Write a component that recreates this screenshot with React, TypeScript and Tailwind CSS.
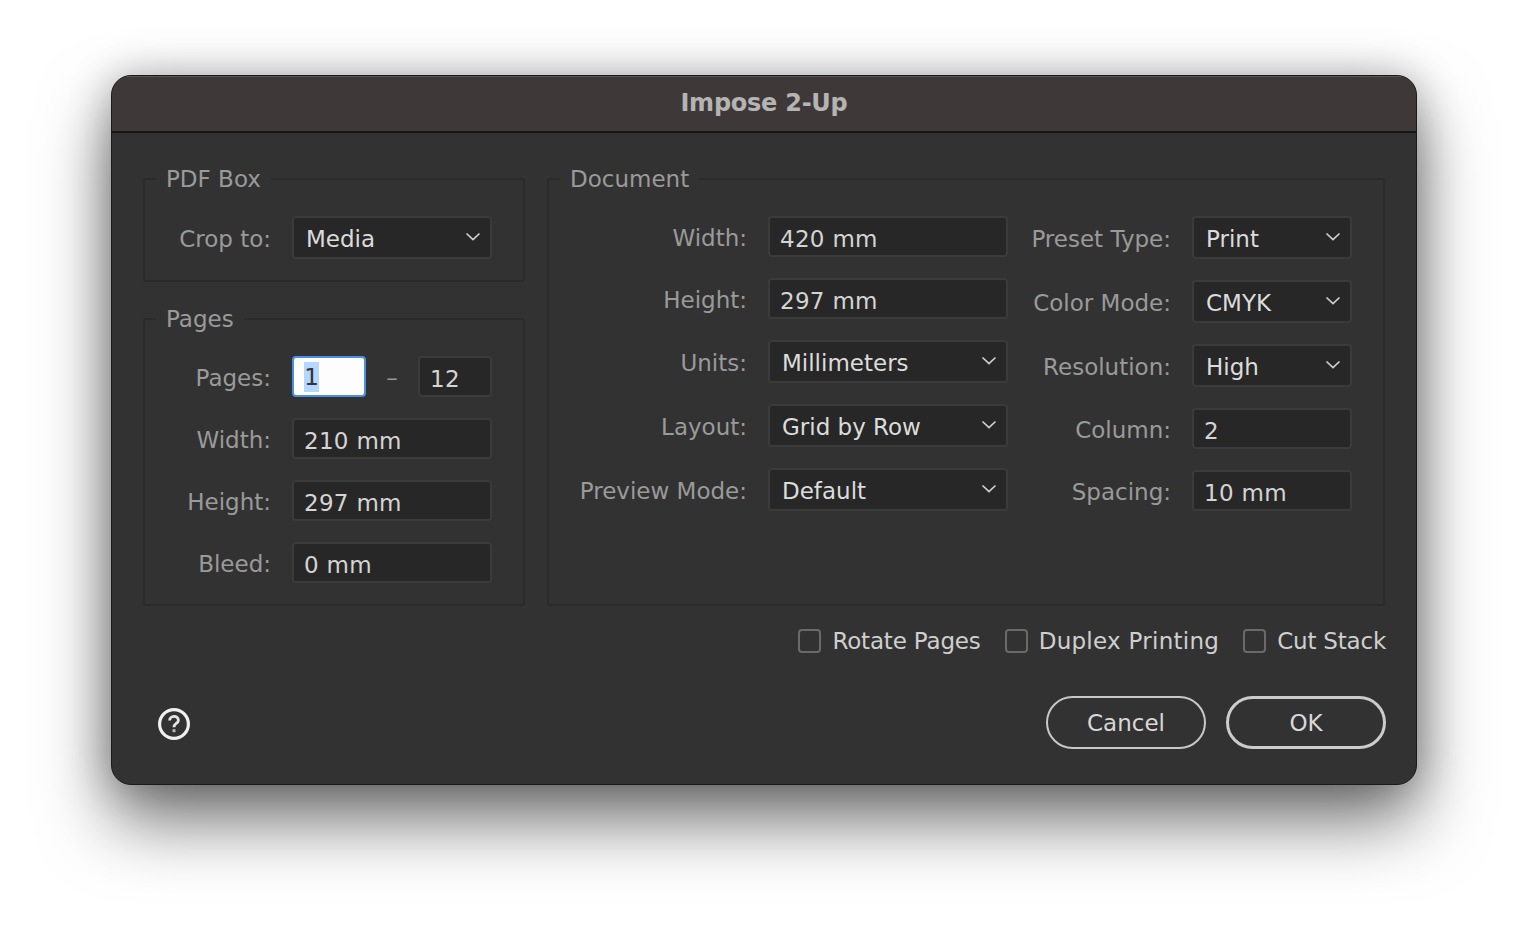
const labelClass = 'text-right text-[#9a9a9a] whitespace-nowrap pt-[4px]';

function Chevron() {
  return (
    <svg width="16" height="10" viewBox="0 0 16 10" fill="none" className="shrink-0">
      <path d="M1.5 1.5 L8 7.5 L14.5 1.5" stroke="#d0d0d0" strokeWidth="1.7" />
    </svg>
  );
}

function Select({ value, width }: { value: string; width: string }) {
  return (
    <div className={`${width} h-[43px] shrink-0 flex items-center justify-between pl-[12px] pr-[9px] bg-[#272727] border-2 border-[#3b3b3b] rounded-[4px] text-[#dcdcdc]`}>
      <span className="pt-[4px]">{value}</span>
      <span className="pb-[2px]"><Chevron /></span>
    </div>
  );
}

function Input({ value, width }: { value: string; width: string }) {
  return (
    <div className={`${width} h-[41px] shrink-0 flex items-center pl-[10px] bg-[#272727] border-2 border-[#3b3b3b] rounded-[4px] text-[#d4d4d4] tracking-[0.3px]`}>
      <span className="pt-[5px]">{value}</span>
    </div>
  );
}

function Row({ label, labelWidth, children }: { label: string; labelWidth: string; children: React.ReactNode }) {
  return (
    <div className="flex items-center gap-[21px]">
      <span className={`${labelWidth} ${labelClass}`}>{label}</span>
      {children}
    </div>
  );
}

function Group({ title, className, children }: { title: string; className: string; children: React.ReactNode }) {
  return (
    <fieldset className={`border-2 border-[#2b2b2b] rounded-[3px] ${className}`}>
      <legend className="ml-[1px] px-[10px] text-[#9a9a9a] h-[30px] leading-[30px]">{title}</legend>
      {children}
    </fieldset>
  );
}

function Check({ label, textClass }: { label: string; textClass: string }) {
  return (
    <div className="flex items-center gap-[11px]">
      <span className="w-[23px] h-[24px] border-2 border-[#6a6a6a] rounded-[4px]" />
      <span className={`text-[#cfcfcf] ${textClass}`}>{label}</span>
    </div>
  );
}

export default function App() {
  return (
    <div className="w-[1528px] h-[932px] overflow-hidden bg-white pt-[75px] pl-[111px] font-['DejaVu_Sans',sans-serif] text-[23px]">
      <div className="w-[1306px] h-[710px] rounded-[20px] border border-[#1a1a1a] bg-[#323232] shadow-[0_36px_70px_rgba(0,0,0,0.55),0_0_40px_rgba(0,0,0,0.25)] overflow-hidden">
        <div className="h-[57px] pb-[2px] flex items-center justify-center bg-[#3f3838] border-b-2 border-[#161616] border-t border-t-[#5a5555] text-[24px] tracking-[-0.25px] font-bold text-[#b4b4b4]">
          Impose 2-Up
        </div>

        <div className="pl-[31px] pr-[30px] pt-[31px]">
          <div className="flex gap-[22px]">
            <div className="w-[382px] flex flex-col gap-[22px]">
              <Group title="PDF Box" className="h-[118px] pl-[10px]">
                <div className="pt-[22px]">
                  <Row label="Crop to:" labelWidth="w-[116px]">
                    <Select value="Media" width="w-[200px]" />
                  </Row>
                </div>
              </Group>
              <Group title="Pages" className="h-[302px] pl-[10px]">
                <div className="pt-[22px] flex flex-col gap-[21px]">
                  <Row label="Pages:" labelWidth="w-[116px]">
                    <div className="flex items-center">
                      <div className="w-[74px] h-[41px] flex items-center pl-[10px] bg-[#fdfdfd] border-2 border-[#4a90e2] rounded-[4px] text-[#333333]">
                        <span className="bg-[#b3d7ff] h-[30px] w-[15px] leading-[30px] text-center">1</span>
                      </div>
                      <span className="w-[52px] text-center text-[#989898] pt-[3px]">–</span>
                      <Input value="12" width="w-[74px]" />
                    </div>
                  </Row>
                  <Row label="Width:" labelWidth="w-[116px]"><Input value="210 mm" width="w-[200px]" /></Row>
                  <Row label="Height:" labelWidth="w-[116px]"><Input value="297 mm" width="w-[200px]" /></Row>
                  <Row label="Bleed:" labelWidth="w-[116px]"><Input value="0 mm" width="w-[200px]" /></Row>
                </div>
              </Group>
            </div>

            <Group title="Document" className="w-[838px] h-[442px] pl-[10px]">
              <div className="pt-[22px] flex gap-[22px]">
                <div className="flex flex-col gap-[21px]">
                  <Row label="Width:" labelWidth="w-[188px]"><Input value="420 mm" width="w-[240px]" /></Row>
                  <Row label="Height:" labelWidth="w-[188px]"><Input value="297 mm" width="w-[240px]" /></Row>
                  <Row label="Units:" labelWidth="w-[188px]"><Select value="Millimeters" width="w-[240px]" /></Row>
                  <Row label="Layout:" labelWidth="w-[188px]"><Select value="Grid by Row" width="w-[240px]" /></Row>
                  <Row label="Preview Mode:" labelWidth="w-[188px]"><Select value="Default" width="w-[240px]" /></Row>
                </div>
                <div className="flex flex-col gap-[21px]">
                  <Row label="Preset Type:" labelWidth="w-[141px]"><Select value="Print" width="w-[160px]" /></Row>
                  <Row label="Color Mode:" labelWidth="w-[141px]"><Select value="CMYK" width="w-[160px]" /></Row>
                  <Row label="Resolution:" labelWidth="w-[141px]"><Select value="High" width="w-[160px]" /></Row>
                  <Row label="Column:" labelWidth="w-[141px]"><Input value="2" width="w-[160px]" /></Row>
                  <Row label="Spacing:" labelWidth="w-[141px]"><Input value="10 mm" width="w-[160px]" /></Row>
                </div>
              </div>
            </Group>
          </div>

          <div className="mt-[18px] flex justify-end gap-[24px]">
            <Check label="Rotate Pages" textClass="tracking-[-0.17px]" />
            <Check label="Duplex Printing" textClass="tracking-[0.27px]" />
            <Check label="Cut Stack" textClass="tracking-[-0.2px]" />
          </div>

          <div className="mt-[37px] flex items-center justify-between">
            <svg width="34" height="34" viewBox="0 0 34 34" fill="none" className="ml-[14px] mt-[3px]">
              <circle cx="17" cy="17" r="14.4" stroke="#efefef" strokeWidth="3.2" />
              <path d="M12.6 13.6 C12.6 8 21.4 8 21.4 13.2 C21.4 16.6 17 16.4 17 20.2" stroke="#e4e4e4" strokeWidth="2.8" />
              <rect x="15.5" y="22.2" width="3" height="3" fill="#b8b8b8" />
            </svg>
            <div className="flex gap-[20px] text-[#d8d8d8]">
              <button className="w-[160px] h-[53px] pt-[3px] rounded-full border-2 border-[#c8c8c8]">Cancel</button>
              <button className="w-[160px] h-[53px] pt-[3px] rounded-full border-[3px] border-[#cccccc]">OK</button>
            </div>
          </div>
        </div>
      </div>
    </div>
  );
}
